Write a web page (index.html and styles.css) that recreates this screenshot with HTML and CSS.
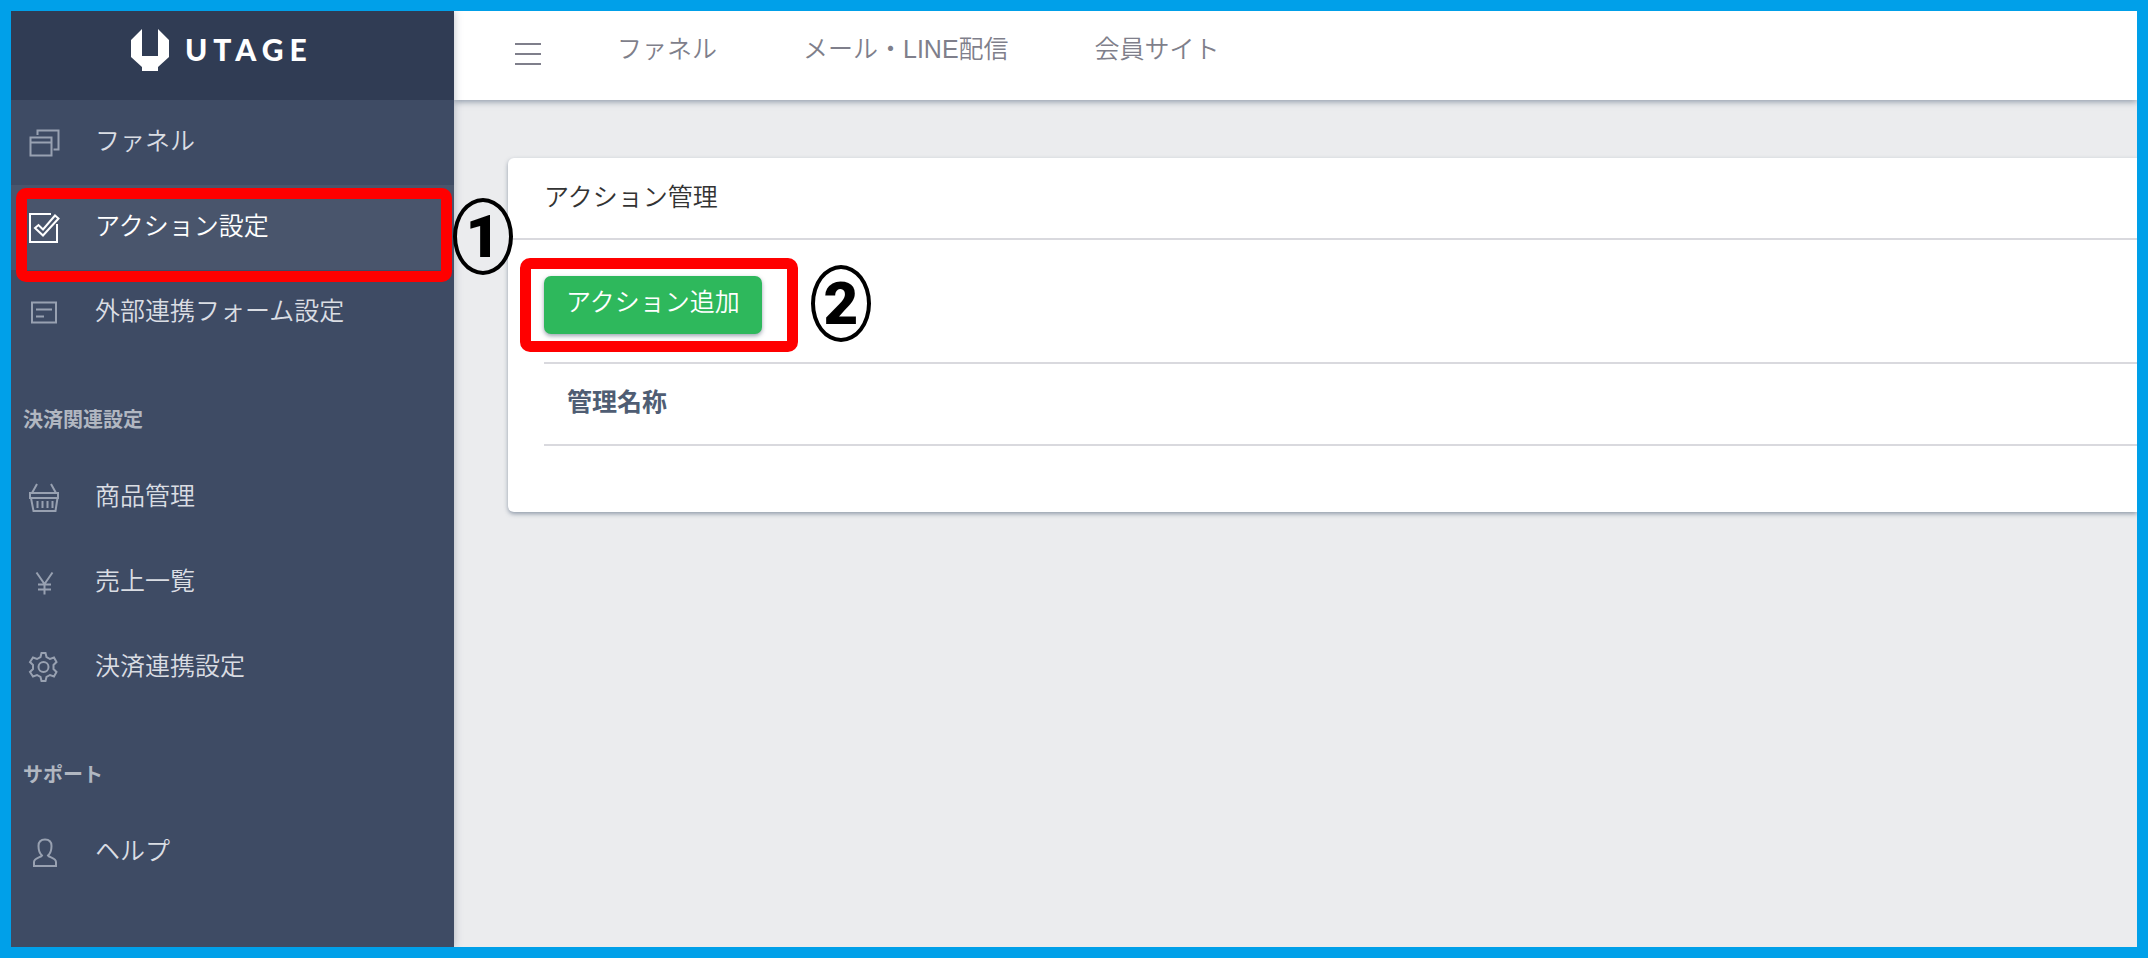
FILE: index.html
```html
<!DOCTYPE html>
<html lang="ja">
<head>
<meta charset="utf-8">
<meta name="viewport" content="width=device-width, initial-scale=1">
<title>アクション管理 | UTAGE</title>
<link rel="stylesheet" href="styles.css">
</head>
<body>
<div class="app">
  <aside class="sidebar">
    <a class="brand" href="#">
      <svg class="brand-mark" viewBox="0 0 38 42" aria-hidden="true"><path d="M11 0V27H27V0L38 11V28L27 38V42H11V38L0 28V11Z" fill="#fff"/></svg>
      <span class="brand-name">UTAGE</span>
    </a>
    <nav class="side-nav">
      <a class="side-link" href="#">
        <svg class="icon" viewBox="0 0 32 32"><path d="M2.5 10.5H23.5V28.500H2.500ZM2.500 15.500H23.500M9.500 8V3.500H30.500V22.500H25.500"/></svg>
        <span class="side-label">ファネル</span>
      </a>
      <a class="side-link active" href="#">
        <svg class="icon" viewBox="0 0 32 32"><path d="M23 2H2V30H29V12"/><path d="M7 16L10.500 13L15 17.500L27 3.500L30.500 6.500L15 23.500Z"/></svg>
        <span class="side-label">アクション設定</span>
        <span class="marker marker-link"></span>
        <span class="step step-link">1</span>
      </a>
      <a class="side-link" href="#">
        <svg class="icon" viewBox="0 0 32 32"><path d="M4 5.500H28V25.500H4ZM8 12.500H24M8 19.500H16"/></svg>
        <span class="side-label">外部連携フォーム設定</span>
      </a>
      <h2 class="side-title">決済関連設定</h2>
      <a class="side-link" href="#">
        <svg class="icon" viewBox="0 0 32 32"><path d="M2 11H30V16H2ZM3 16L5.500 29H27.500L29.500 16M4 11L9 2M28 11L23 2M9.500 19V26M14.500 19V26M19.500 19V26M24.500 19V26"/></svg>
        <span class="side-label">商品管理</span>
      </a>
      <a class="side-link" href="#">
        <svg class="icon" viewBox="0 0 32 32"><path d="M8.500 5.500L16.500 17L24.500 5.500M16.500 17V27.500M10 17.500H23M10 22.500H23"/></svg>
        <span class="side-label">売上一覧</span>
      </a>
      <a class="side-link" href="#">
        <svg class="icon" viewBox="0 0 32 32"><path d="M13.500 1H17.500L18.500 5L22 7L26 5.500L28.500 10L25.500 13V17L28.500 20L26 24.500L22 23L18.500 25L17.500 29H13.500L12.500 25L9 23L5 24.500L2 20L5 17V13L2 10L5 5.500L9 7L12.500 5Z"/><circle cx="15.500" cy="15" r="5"/></svg>
        <span class="side-label">決済連携設定</span>
      </a>
      <h2 class="side-title">サポート</h2>
      <a class="side-link" href="#">
        <svg class="icon" viewBox="0 0 32 32"><path d="M14 18.500C11 16 10.500 14 10.500 9C10.500 4.500 13 2.500 17 2.500S23.500 4.500 23.500 9C23.500 14 23 16 20 18.500C21 20.500 28 21 28 25V29H6V25C6 21 13 20.500 14 18.500Z"/></svg>
        <span class="side-label">ヘルプ</span>
      </a>
    </nav>
  </aside>
  <div class="main">
    <header class="topbar">
      <button class="menu-button" type="button" aria-label="メニュー">
        <svg class="menu-icon" viewBox="0 0 26 24"><path d="M0 2H26M0 12H26M0 22H26"/></svg>
      </button>
      <nav class="top-nav">
        <a href="#">ファネル</a>
        <a href="#">メール・LINE配信</a>
        <a href="#">会員サイト</a>
      </nav>
    </header>
    <main class="content">
      <section class="card">
        <h1 class="card-title">アクション管理</h1>
        <div class="card-body">
          <div class="add-wrap">
            <button class="add-button" type="button">アクション追加</button>
            <span class="marker marker-button"></span>
            <span class="step step-button">2</span>
          </div>
          <table class="list">
            <thead><tr><th scope="col">管理名称</th></tr></thead>
            <tbody></tbody>
          </table>
        </div>
      </section>
    </main>
  </div>
</div>
</body>
</html>
```
FILE: styles.css
```css
* { box-sizing: border-box; }
body {
  margin: 0;
  font-family: "Liberation Sans", "Noto Sans CJK JP", sans-serif;
  font-size: 25px;
  font-weight: 350;
  line-height: 36px;
  color: #333;
}
a { color: inherit; text-decoration: none; }
.app {
  display: flex;
  min-height: 100vh;
  border: 11px solid #00a0e9;
  background: #ebecee;
  overflow: hidden;
}
.sidebar {
  position: relative;
  z-index: 2;
  flex: 0 0 443px;
  background: #3e4b64;
  color: #dadde3;
  box-shadow: 0 0 8px rgba(60, 75, 100, 0.35);
}
.brand {
  display: flex;
  align-items: flex-start;
  gap: 16px;
  height: 89px;
  padding: 18px 24px 0 120px;
  background: #303c54;
}
.brand-mark { width: 38px; height: 42px; }
.brand-name {
  font-family: Lato, sans-serif;
  font-size: 30px;
  font-weight: 900;
  line-height: 40px;
  letter-spacing: 6px;
  color: #fff;
}
.side-link {
  position: relative;
  display: flex;
  align-items: center;
  gap: 35px;
  height: 85px;
  padding-left: 17px;
}
.side-link.active { background: #49556c; color: #fff; }
.side-label { padding-bottom: 3px; }
.icon {
  width: 32px;
  height: 32px;
  fill: none;
  stroke: #98a1b1;
  stroke-width: 2;
}
.active .icon { stroke: #fff; }
.side-title {
  height: 100px;
  margin: 0;
  padding: 47px 12px 0;
  font-size: 20px;
  font-weight: 700;
  line-height: 36px;
  color: #b1b7c1;
}
.marker {
  position: absolute;
  border: 11px solid #f00;
  border-radius: 10px;
  pointer-events: none;
}
.marker-link { inset: 3px 2px -12px 5px; }
.marker-button { inset: -18px -36px -18px -24px; }
.step {
  position: absolute;
  display: flex;
  align-items: center;
  justify-content: center;
  width: 60px;
  height: 77px;
  border: 4px solid #000;
  border-radius: 50%;
  font-family: Roboto, "Noto Sans", sans-serif;
  font-size: 60px;
  font-weight: 900;
  line-height: 69px;
  color: #000;
}
.step-link { left: calc(100% - 1px); top: 13px; background: #ebecee; }
.step-button { left: calc(100% + 49px); top: -11px; }
.main { flex: 1; min-width: 0; }
.topbar {
  position: relative;
  display: flex;
  height: 89px;
  padding: 20px 61px;
  background: #fff;
  color: #7f7f8b;
  box-shadow: 0 2px 6px rgba(60, 80, 105, 0.5);
}
.menu-button {
  width: 26px;
  height: 46px;
  padding: 0;
  border: 0;
  background: none;
}
.menu-icon {
  display: block;
  width: 26px;
  height: 24px;
  stroke: #7f7f8b;
  stroke-width: 2;
}
.top-nav { display: flex; gap: 86px; padding-left: 76px; }
.content { padding: 58px 0 40px 54px; }
.card {
  border-radius: 6px 0 0 6px;
  background: #fff;
  box-shadow: 0 2px 4px rgba(60, 80, 105, 0.5);
}
.card-title {
  margin: 0;
  padding: 21px 36px 23px;
  border-bottom: 2px solid #d9d9de;
  font-size: 25px;
  font-weight: 350;
  line-height: 36px;
}
.card-body { padding: 36px 0 66px 36px; }
.add-wrap { position: relative; width: fit-content; margin-bottom: 28px; }
.add-button {
  display: block;
  height: 58px;
  padding: 8px 22px 14px;
  border: 0;
  border-radius: 7px;
  background: #2eb85c;
  box-shadow: 0 2px 4px rgba(60, 75, 100, 0.5);
  font: inherit;
  color: #fff;
}
.list { width: 100%; border-collapse: separate; border-spacing: 0; }
.list th {
  padding: 20px 23px 24px;
  border: solid #d9d9de;
  border-width: 2px 0;
  font-weight: 700;
  text-align: left;
  color: #4f5d73;
}
```
